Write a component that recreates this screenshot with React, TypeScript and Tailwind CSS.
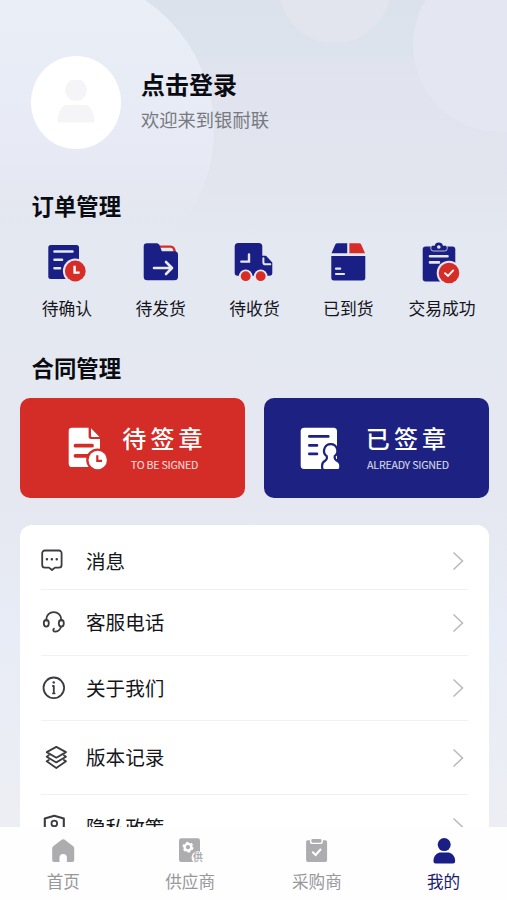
import { ReactNode } from 'react';
import { clsx } from 'clsx';

const BLUE = '#1a1f86';
const RED = '#d62d27';
const PAGE = '#e5e8f2';

const orders = [
  {
    label: '待确认',
    icon: (
      <>
        <rect x="3.3" y="4" width="30.7" height="34" rx="2.5" fill={BLUE} />
        <path d="M9.5 10.5H27.5M9.5 18.8H17M9.5 27.3H15" stroke={PAGE} strokeWidth="2.6" strokeLinecap="round" />
        <circle cx="30.3" cy="30" r="12.4" fill={PAGE} />
        <circle cx="30.3" cy="30" r="10.4" fill={RED} />
        <path d="M29.6 24.8V31.6H34.6" stroke="#fff" strokeWidth="2.4" fill="none" />
      </>
    ),
  },
  {
    label: '待发货',
    icon: (
      <>
        <path d="M21 5.6H31.5C34 5.6 35.7 7.5 35.7 12" stroke={RED} strokeWidth="2.4" fill="none" />
        <path d="M8 2.3H18.3L20.3 3.5L22.8 10.2H35.5A3.6 3.6 0 0 1 39 13.8V35.7A3.6 3.6 0 0 1 35.4 39.3H8.3A3.6 3.6 0 0 1 4.7 35.7V5.6A3.3 3.3 0 0 1 8 2.3Z" fill={BLUE} />
        <path d="M15 27H32M27 21L33 27L27 33" stroke="#e9ecf6" strokeWidth="2.6" fill="none" strokeLinecap="round" strokeLinejoin="round" />
      </>
    ),
  },
  {
    label: '待收货',
    icon: (
      <>
        <path d="M6.2 2H26.8A3.5 3.5 0 0 1 30.3 5.5V14.8H34L40.3 21.5V32A2.8 2.8 0 0 1 37.5 34.8H5.5A2.8 2.8 0 0 1 2.7 32V5.5A3.5 3.5 0 0 1 6.2 2Z" fill={BLUE} />
        <path d="M9.3 20.6H17V13.5" stroke={PAGE} strokeWidth="2.4" fill="none" strokeLinecap="round" />
        <path d="M31.4 17.2V21.4Q31.4 23.2 33.2 23.2H38.3" stroke={PAGE} strokeWidth="2" fill="none" strokeLinecap="round" />
        <circle cx="13.7" cy="35.2" r="6.8" fill={PAGE} />
        <circle cx="28.7" cy="35.2" r="6.8" fill={PAGE} />
        <circle cx="13.7" cy="35.2" r="4.9" fill={RED} />
        <circle cx="28.7" cy="35.2" r="4.9" fill={RED} />
      </>
    ),
  },
  {
    label: '已到货',
    icon: (
      <>
        <path d="M11.5 2.2H21.2V12.3H5.5L9.3 3.6Q9.9 2.2 11.5 2.2Z" fill={BLUE} />
        <path d="M23.4 2.2H33Q34.6 2.2 35.2 3.6L39 12.3H23.4Z" fill={RED} />
        <path d="M5.3 15H39.3V36.8A2.6 2.6 0 0 1 36.7 39.4H7.9A2.6 2.6 0 0 1 5.3 36.8Z" fill={BLUE} />
        <path d="M10 27.7H14.2M10 33H18" stroke={PAGE} strokeWidth="2.2" strokeLinecap="round" />
      </>
    ),
  },
  {
    label: '交易成功',
    icon: (
      <>
        <rect x="2.7" y="5.5" width="32.6" height="35" rx="3" fill={BLUE} />
        <path d="M10.8 5.5V7.5Q10.8 10 13.3 10H24.7Q27.2 10 27.2 7.5V5.5" stroke={PAGE} strokeWidth="0.8" fill="none" />
        <path d="M12 4.8H14.6A4.3 4.3 0 0 1 23 4.8H26V7.8Q26 8.8 25 8.8H13Q12 8.8 12 7.8Z" fill={BLUE} />
        <circle cx="18.8" cy="6" r="1.8" fill={PAGE} />
        <path d="M10 15.2H27.5M10 21.4H19" stroke={PAGE} strokeWidth="2.6" strokeLinecap="round" />
        <circle cx="29" cy="32" r="12.3" fill={PAGE} />
        <circle cx="29" cy="32" r="10.3" fill={RED} />
        <path d="M25 32.2L28 35L33.2 29.4" stroke="#fff" strokeWidth="1.9" fill="none" strokeLinecap="round" />
      </>
    ),
  },
];

const menu = [
  {
    label: '消息',
    row: 'h-[65px] pt-2',
    icon: (
      <>
        <path d="M4.8 3.5H19A2.6 2.6 0 0 1 21.6 6.1V18A2.6 2.6 0 0 1 19 20.6H15L12 23L9 20.6H4.8A2.6 2.6 0 0 1 2.2 18V6.1A2.6 2.6 0 0 1 4.8 3.5Z" />
        <path d="M6.9 12.2H7M11.8 12.2H11.9M16.7 12.2H16.8" strokeWidth="2.4" />
      </>
    ),
  },
  {
    label: '客服电话',
    row: 'h-[66px]',
    icon: (
      <>
        <path d="M6.3 11.5V10.5A7.4 7.4 0 0 1 21.2 10.5V11.5" />
        <ellipse cx="6.3" cy="14.3" rx="2.5" ry="3.3" />
        <ellipse cx="21.3" cy="14.3" rx="2.5" ry="3.3" />
        <path d="M21 17.6C20.3 20.8 17.8 22.7 14.5 22.7A1.6 1.6 0 0 1 14 19.8" />
      </>
    ),
  },
  {
    label: '关于我们',
    row: 'h-[65px]',
    icon: (
      <>
        <circle cx="13.8" cy="13.8" r="10.3" />
        <path d="M13.8 12V19.3M12.9 12H13.8M12.9 19.3H14.7" />
        <path d="M13.7 8.4H13.8" strokeWidth="2.4" />
      </>
    ),
  },
  {
    label: '版本记录',
    row: 'h-[74px]',
    icon: (
      <>
        <path d="M16.3 2.9L26 8.1L16.3 13.7L6.7 8.1Z" />
        <path d="M8.8 11.3L6.7 12.7L16.3 18.4L26 12.7L23.9 11.3" />
        <path d="M8.8 15.9L6.7 17.3L16.3 24L26 17.3L23.9 15.9" />
      </>
    ),
  },
  {
    label: '隐私政策',
    row: 'h-[65px]',
    icon: (
      <>
        <path d="M14.3 2.7L23.8 5.6V13C23.8 18 20 22.5 14.3 25C8.6 22.5 4.8 18 4.8 13V5.6Z" strokeWidth="2.1" />
        <circle cx="14.3" cy="10.4" r="2.8" />
      </>
    ),
  },
];

const tabs = [
  {
    label: '首页',
    icon: (
      <path d="M13 2.6Q14.2 1.7 15.4 2.6L24.2 9.3Q25.2 10.1 25.2 11.3V23.2A1.8 1.8 0 0 1 23.4 25H17.9V20.6A3.7 3.7 0 0 0 10.5 20.6V25H5A1.8 1.8 0 0 1 3.2 23.2V11.3Q3.2 10.1 4.2 9.3Z" />
    ),
  },
  {
    label: '供应商',
    icon: (
      <>
        <rect x="3" y="1.3" width="21" height="23.7" rx="2.2" />
        <circle cx="12" cy="10.2" r="3.3" fill="none" stroke="#fff" strokeWidth="2.4" />
        <circle cx="12" cy="10.2" r="4.8" fill="none" stroke="#fff" strokeWidth="1.4" strokeDasharray="2.5 2.526" />
        <circle cx="21.8" cy="20.6" r="6.3" fill="#fff" />
        <text x="21.9" y="24.3" fontSize="9.8" fontWeight="700" textAnchor="middle">供</text>
      </>
    ),
  },
  {
    label: '采购商',
    icon: (
      <>
        <path d="M4.5 3.2H6.9V4.5Q6.9 7.1 9.5 7.1H17.3Q19.9 7.1 19.9 4.5V3.2H22.3A1.8 1.8 0 0 1 24.1 5V23.2A1.8 1.8 0 0 1 22.3 25H4.9A1.8 1.8 0 0 1 3.1 23.2V5A1.8 1.8 0 0 1 4.5 3.2Z" />
        <rect x="8.4" y="1.9" width="10" height="3.8" rx="1.2" />
        <path d="M9.3 14.8L12.6 18L18 12" stroke="#fff" strokeWidth="2" fill="none" />
      </>
    ),
  },
  {
    label: '我的',
    active: true,
    icon: (
      <>
        <circle cx="14.2" cy="7.6" r="6.5" />
        <path d="M9.5 15.4H19Q25.2 17.6 25.2 24Q25.2 26.5 23 26.5H5.6Q3.4 26.5 3.4 24Q3.4 17.6 9.5 15.4Z" />
      </>
    ),
  },
];

const SectionTitle = ({ children }: { children: ReactNode }) => (
  <h2 className="pl-[11.5px] text-[22.4px] leading-8 font-bold text-[#0b0b12]">{children}</h2>
);

type SignCardProps = {
  title: string;
  sub: string;
  className: string;
  textClass: string;
  icon: ReactNode;
};

const SignCard = ({ title, sub, className, textClass, icon }: SignCardProps) => (
  <button className={clsx('flex h-[100px] w-[225px] items-center rounded-[10px] text-white', className)}>
    <svg width="44" height="46" viewBox="0 0 44 46" fill="none">{icon}</svg>
    <div className={clsx('flex flex-col items-center', textClass)}>
      <span className="text-2xl leading-8 font-medium tracking-[4.2px]">{title}</span>
      <span className="pt-px text-[10.7px] leading-5 whitespace-nowrap tracking-[-0.25px] text-white/85">{sub}</span>
    </div>
  </button>
);

const App = () => {
  return (
    <div className="relative flex h-[900px] w-[507px] flex-col overflow-hidden bg-[#e5e8f2] font-['Noto_Sans_CJK_SC',sans-serif]">
      {/* Decorative bubbles behind the header */}
      <svg className="absolute inset-0" width="507" height="900">
        <defs>
          <linearGradient id="page" x1="0" y1="0" x2="0" y2="1">
            <stop offset="0" stopColor="#dce2ec" />
            <stop offset="0.06" stopColor="#dde3ed" />
            <stop offset="0.09" stopColor="#e1e4ee" />
            <stop offset="0.2" stopColor="#e2e5ee" />
            <stop offset="0.27" stopColor="#e4e8f1" />
            <stop offset="0.56" stopColor="#e5e8f0" />
            <stop offset="0.7" stopColor="#e8ecf6" />
            <stop offset="0.92" stopColor="#eceef3" />
          </linearGradient>
          <linearGradient id="bubble" x1="0" y1="0" x2="0" y2="1">
            <stop offset="0.1" stopColor="#e9eef7" />
            <stop offset="0.6" stopColor="#e7eaf4" />
            <stop offset="0.85" stopColor="#e4e8f1" stopOpacity="0" />
          </linearGradient>
        </defs>
        <rect width="507" height="900" fill="url(#page)" />
        <circle cx="57" cy="130" r="157" fill="url(#bubble)" />
        <circle cx="335" cy="-13" r="56" fill="#e2e5ee" />
        <circle cx="500" cy="45" r="87" fill="#e4e6f1" />
      </svg>

      <main className="relative flex-1 overflow-hidden pr-[18px] pl-5">
        {/* Profile */}
        <div className="flex items-center pt-14 pl-[11px]">
          <div className="flex h-[93px] w-[90px] items-center justify-center rounded-[50%] bg-white">
            <svg width="38" height="46" viewBox="0 0 38 46" fill="#f5f5f7">
              <circle cx="19" cy="10" r="10.8" />
              <path d="M8 25H30Q37.5 29 37.5 42.5H0.5Q0.5 29 8 25Z" />
            </svg>
          </div>
          <div className="-mt-1 pl-5">
            <h1 className="text-2xl leading-[34px] font-bold text-[#0b0b12]">点击登录</h1>
            <p className="pt-0.5 text-[18.3px] leading-8 text-[#777a80]">欢迎来到银耐联</p>
          </div>
        </div>

        {/* Orders */}
        <div className="pt-10">
          <SectionTitle>订单管理</SectionTitle>
          <div className="flex pt-5">
            {orders.map(({ label, icon }) => (
              <button key={label} className="flex flex-1 flex-col items-center">
                <svg width="44" height="44" viewBox="0 0 44 44" fill="none">{icon}</svg>
                <span className="pt-[9px] text-[16.8px] leading-7 whitespace-nowrap text-[#15151c]">{label}</span>
              </button>
            ))}
          </div>
        </div>

        {/* Contracts */}
        <div className="pt-[29px]">
          <SectionTitle>合同管理</SectionTitle>
          <div className="flex justify-between pt-[15px]">
            <SignCard
              title="待签章"
              sub="TO BE SIGNED"
              className="bg-[#d42d27] pl-[46px]"
              textClass="w-[109px]"
              icon={
                <>
                  <path d="M6 2.7H22.6V11.5Q22.6 14 25.1 14H34V38.4A3.6 3.6 0 0 1 30.4 42H6.3A3.6 3.6 0 0 1 2.7 38.4V6A3.3 3.3 0 0 1 6 2.7Z" fill="#fff" />
                  <path d="M25 3.3L33.5 12H26Q25 12 25 11Z" fill="#fff" />
                  <path d="M9.5 20.7H26M9.5 30.8H23" stroke="#d42d27" strokeWidth="3.8" strokeLinecap="round" />
                  <circle cx="31.7" cy="35" r="11.5" fill="#d42d27" />
                  <circle cx="31.7" cy="35" r="9.2" fill="#fff" />
                  <path d="M31.3 30.3V35.9H36" stroke="#d42d27" strokeWidth="2.2" />
                </>
              }
            />
            <SignCard
              title="已签章"
              sub="ALREADY SIGNED"
              className="bg-[#1d2282] pl-[34px]"
              textClass="w-[132px]"
              icon={
                <>
                  <rect x="2.7" y="2.7" width="36.3" height="41.3" rx="3.5" fill="#fff" />
                  <path d="M11.3 11.4H30.3M11.3 20.4H19M11.3 28.9H19" stroke="#1d2282" strokeWidth="2.6" strokeLinecap="round" />
                  <path
                    d="M32.7 20.3A5.6 5.6 0 0 0 29.7 30.6Q30.8 34.6 28 36.5Q25.2 37.8 25.2 40.5V42.4Q25.2 44 26.8 44H39.6Q41.2 44 41.2 42.4V40.5Q41.2 37.8 38 36.5Q34.9 34.6 35.7 30.6A5.6 5.6 0 0 0 32.7 20.3Z"
                    fill="#fff"
                    stroke="#1d2282"
                    strokeWidth="4.4"
                    paintOrder="stroke"
                  />
                </>
              }
            />
          </div>
        </div>

        {/* Menu */}
        <div className="mt-[27px] rounded-t-xl bg-white px-[21px]">
          {menu.map(({ label, icon, row }) => (
            <div key={label} className={clsx('flex items-center border-b border-[#f1f1f3]', row)}>
              <svg
                className="-ml-px"
                width="28"
                height="28"
                viewBox="0 0 28 28"
                fill="none"
                stroke="#3c3c40"
                strokeWidth="1.8"
                strokeLinecap="round"
                strokeLinejoin="round"
              >
                {icon}
              </svg>
              <span className="flex-1 pb-px pl-[18px] text-[19.6px] leading-7 text-[#15151a]">{label}</span>
              <svg className="mr-1" width="12" height="20" viewBox="0 0 12 20" fill="none" stroke="#b9b9bd" strokeWidth="1.5">
                <path d="M1.5 1.5L10.5 10L1.5 18.5" />
              </svg>
            </div>
          ))}
        </div>
      </main>

      {/* Bottom tabs */}
      <nav className="relative flex h-[73px] bg-[#fefefe] pt-[10px]">
        {tabs.map(({ label, icon, active }) => (
          <button
            key={label}
            className={clsx('flex flex-1 flex-col items-center', active ? 'text-[#1a1a6e]' : 'text-[#98989b]')}
          >
            <svg width="28" height="28" viewBox="0 0 28 28" fill={active ? BLUE : '#adadb0'}>{icon}</svg>
            <span className="pt-1 text-[16.6px] leading-6">{label}</span>
          </button>
        ))}
      </nav>
    </div>
  );
};

export default App;
